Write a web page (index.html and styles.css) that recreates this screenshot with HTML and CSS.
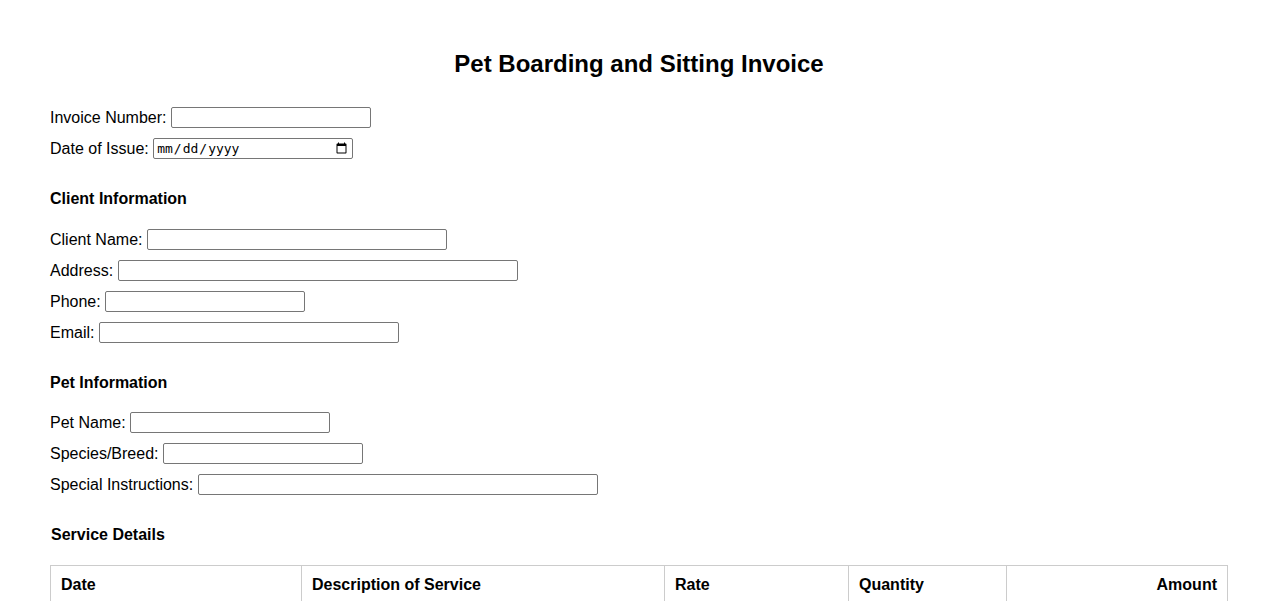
FILE: index.html
```html
<!DOCTYPE html>
<html lang="en">
<head>
<meta charset="utf-8">
<title>Pet Boarding and Sitting Invoice</title>
<link rel="stylesheet" href="styles.css">
</head>
<body>
<div class="page">
  <h1 class="title">Pet Boarding and Sitting Invoice</h1>

  <div class="fields">
    <div class="field"><label for="inv">Invoice Number:</label><input id="inv" type="text" class="w200"></div>
    <div class="field"><label for="doi">Date of Issue:</label><input id="doi" type="date" class="w200 date"></div>
  </div>

  <h2 class="section section-first">Client Information</h2>
  <div class="fields">
    <div class="field"><label for="cn">Client Name:</label><input id="cn" type="text" class="w300"></div>
    <div class="field"><label for="ad">Address:</label><input id="ad" type="text" class="w400"></div>
    <div class="field"><label for="ph">Phone:</label><input id="ph" type="text" class="w200"></div>
    <div class="field"><label for="em">Email:</label><input id="em" type="text" class="w300"></div>
  </div>

  <h2 class="section">Pet Information</h2>
  <div class="fields">
    <div class="field"><label for="pn">Pet Name:</label><input id="pn" type="text" class="w200"></div>
    <div class="field"><label for="sb">Species/Breed:</label><input id="sb" type="text" class="w200"></div>
    <div class="field"><label for="si">Special Instructions:</label><input id="si" type="text" class="w400"></div>
  </div>

  <h2 class="section section-last">Service Details</h2>
  <table class="services">
    <colgroup>
      <col class="c-date"><col class="c-desc"><col class="c-rate"><col class="c-qty"><col class="c-amt">
    </colgroup>
    <thead>
      <tr><th>Date</th><th>Description of Service</th><th>Rate</th><th>Quantity</th><th class="right">Amount</th></tr>
    </thead>
    <tbody>
      <tr><td><input type="date" class="cell-input"></td><td><input type="text" class="cell-input"></td><td><input type="text" class="cell-input"></td><td><input type="text" class="cell-input"></td><td class="right"><input type="text" class="cell-input"></td></tr>
      <tr><td><input type="date" class="cell-input"></td><td><input type="text" class="cell-input"></td><td><input type="text" class="cell-input"></td><td><input type="text" class="cell-input"></td><td class="right"><input type="text" class="cell-input"></td></tr>
    </tbody>
  </table>
</div>
</body>
</html>
```
FILE: styles.css
```css
html, body {
  margin: 0;
  padding: 0;
  background: #ffffff;
}
body {
  font-family: "Liberation Sans", Arial, sans-serif;
  font-size: 16px;
  color: #000000;
}
.page {
  padding: 50px 50px 40px 50px;
}
.title {
  margin: 0 0 29px 0;
  font-size: 24px;
  line-height: 28px;
  font-weight: bold;
  text-align: center;
}
.fields {
  display: flex;
  flex-direction: column;
  gap: 10px;
}
.field {
  display: flex;
  align-items: center;
  gap: 4.45px;
  height: 21px;
}
.field label {
  line-height: 18px;
  white-space: nowrap;
}
.field input {
  box-sizing: border-box;
  height: 21px;
  margin: 0;
  padding: 1px 2px;
  border: 1px solid #767676;
  border-radius: 2px;
  font-family: "Liberation Sans", Arial, sans-serif;
  font-size: 13.33px;
  background: #ffffff;
}
.field input.date {
  font-family: "DejaVu Sans Mono", "Liberation Mono", monospace;
  font-size: 13px;
}
.w200 { width: 200px; }
.w300 { width: 300px; }
.w400 { width: 400px; }
.section {
  margin: 31px 0 20px 0;
  font-size: 16px;
  line-height: 18px;
  font-weight: bold;
}
.section-first {
  margin-bottom: 21px;
}
.section-last {
  margin-bottom: 21px;
  padding-left: 1px;
}
.services {
  width: 100%;
  border-collapse: collapse;
  border: 1px solid #cccccc;
}
.c-date { width: 251px; }
.c-desc { width: 363px; }
.c-rate { width: 184px; }
.c-qty { width: 158px; }
.services th,
.services td {
  border: 1px solid #cccccc;
  padding: 10px;
  text-align: left;
  font-size: 16px;
  line-height: 18px;
}
.services th {
  font-weight: bold;
}
.services .right {
  text-align: right;
}
.cell-input {
  box-sizing: border-box;
  width: 100%;
  height: 21px;
  border: 1px solid #767676;
  border-radius: 2px;
}
```
